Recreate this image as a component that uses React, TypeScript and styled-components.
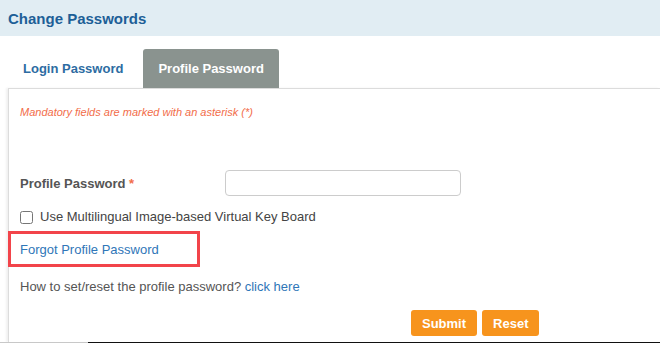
import styled, { createGlobalStyle } from "styled-components";

const Global = createGlobalStyle`
  html, body { margin: 0; padding: 0; background: #fff; }
  body { font-family: "Liberation Sans", Arial, sans-serif; width: 660px; height: 343px; overflow: hidden; }
`;

const Page = styled.div`
  width: 660px;
  height: 343px;
  position: relative;
  overflow: hidden;
`;

const Header = styled.div`
  height: 36px;
  background: #e1edf3;
  display: flex;
  align-items: center;
  padding-left: 8px;
  font-size: 15px;
  font-weight: bold;
  color: #1d5f97;
`;

const Tabs = styled.div`
  display: flex;
  align-items: flex-end;
  margin-top: 13px;
  padding-left: 8px;
  height: 39px;
`;

const Tab = styled.div<{ $active?: boolean }>`
  height: 39px;
  display: flex;
  align-items: center;
  padding: 0 15px;
  font-size: 13px;
  font-weight: bold;
  border-radius: 3px 3px 0 0;
  color: ${(p) => (p.$active ? "#fff" : "#2d6ca2")};
  background: ${(p) => (p.$active ? "#8a938f" : "transparent")};
  margin-right: ${(p) => (p.$active ? "0" : "5px")};
`;

const Panel = styled.div`
  margin-left: 8px;
  border-top: 1px solid #dcdcdc;
  border-left: 1px solid #dcdcdc;
  box-shadow: -2px 0 2px rgba(0, 0, 0, 0.06);
  height: 254px;
  padding: 17px 0 0 11px;
  box-sizing: border-box;
  display: flex;
  flex-direction: column;
`;

const Mandatory = styled.div`
  font-size: 11px;
  font-style: italic;
  color: #f26d4a;
`;

const FieldRow = styled.div`
  display: flex;
  align-items: center;
  margin-top: 52px;
`;

const Label = styled.label`
  width: 205px;
  font-size: 13px;
  font-weight: bold;
  color: #555;
`;

const Star = styled.span`
  color: #f26d4a;
`;

const Input = styled.input`
  width: 236px;
  height: 26px;
  box-sizing: border-box;
  border: 1px solid #ccc;
  border-radius: 4px;
  outline: none;
`;

const CheckRow = styled.label`
  display: flex;
  align-items: center;
  margin-top: 13px;
  font-size: 13px;
  color: #444;
`;

const Check = styled.input`
  width: 13px;
  height: 13px;
  margin: 2px 7px 0 0;
`;

const ForgotBox = styled.div`
  margin: 7px 0 0 -12px;
  width: 192px;
  height: 36px;
  box-sizing: border-box;
  border: 3px solid #f2444a;
  display: flex;
  align-items: center;
  padding-left: 9px;
`;

const Link = styled.a`
  color: #2f76b8;
  font-size: 13px;
  text-decoration: none;
`;

const HelpText = styled.div`
  margin-top: 12px;
  font-size: 13px;
  color: #555;
`;

const Buttons = styled.div`
  display: flex;
  gap: 5px;
  margin-top: 16px;
  padding-left: 391px;
`;

const Button = styled.button`
  height: 26px;
  padding: 0 11px;
  border: none;
  border-radius: 3px;
  background: #f7941d;
  color: #fff;
  font-family: "Liberation Sans", Arial, sans-serif;
  font-size: 13px;
  font-weight: bold;
`;

const BottomLine = styled.div`
  position: absolute;
  left: 0;
  right: 0;
  bottom: 0;
  height: 1px;
  background: linear-gradient(to right, #c8c8c8 88px, #111 88px);
`;

export default function App() {
  return (
    <Page>
      <Global />
      <Header>Change Passwords</Header>
      <Tabs>
        <Tab>Login Password</Tab>
        <Tab $active>Profile Password</Tab>
      </Tabs>
      <Panel>
        <Mandatory>Mandatory fields are marked with an asterisk (*)</Mandatory>
        <FieldRow>
          <Label>
            Profile Password <Star>*</Star>
          </Label>
          <Input type="password" />
        </FieldRow>
        <CheckRow>
          <Check type="checkbox" />
          Use Multilingual Image-based Virtual Key Board
        </CheckRow>
        <ForgotBox>
          <Link href="#">Forgot Profile Password</Link>
        </ForgotBox>
        <HelpText>
          How to set/reset the profile password? <Link href="#">click here</Link>
        </HelpText>
        <Buttons>
          <Button>Submit</Button>
          <Button>Reset</Button>
        </Buttons>
      </Panel>
      <BottomLine />
    </Page>
  );
}
